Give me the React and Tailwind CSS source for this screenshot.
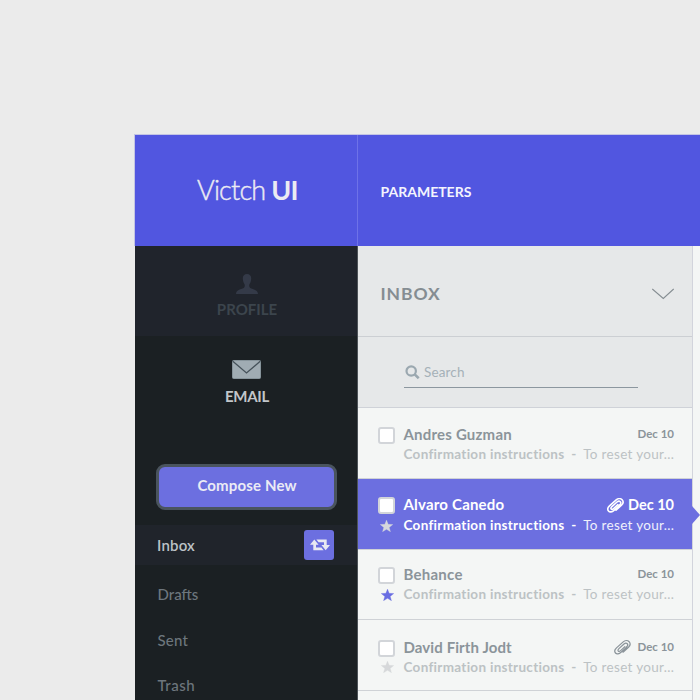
import React from "react";

function PersonIcon() {
  return (
    <svg className="block" width="22" height="20" viewBox="0 0 22 20" fill="#343a48">
      <path d="M11 0C8.300 0 6.700 1.900 6.800 4.600c.1 1.500.3 3 .9 4.200.5 1 1.100 1.600 1.100 2.900 0 2-1.600 2.600-3.600 3.300C2.300 16 .2 16.800 0 20h22c-.2-3.200-2.300-4-5.200-5-2-.7-3.600-1.300-3.600-3.300 0-1.300.6-1.900 1.100-2.900.6-1.200.8-2.700.9-4.200C15.300 1.900 13.700 0 11 0z" />
    </svg>
  );
}

function MailIcon() {
  return (
    <svg className="-ml-[2px] block" width="29" height="19" viewBox="0 0 29 19">
      <rect x="0.500" y="0.500" width="28" height="18" rx="1" fill="#a0acb3" stroke="#87949b" />
      <path d="M0.800 1.200 L14.500 13 L28.200 1.200" fill="none" stroke="#46525a" strokeWidth="1.300" />
    </svg>
  );
}

function RetweetIcon() {
  return (
    <svg className="block" width="20" height="12" viewBox="0 0 20 12" fill="#e9e9f2">
      <path d="M4.300 0.500 L8.600 5.700 H6 V8.500 H11.400 L13.600 11.200 H3.300 V5.700 H0 Z" />
      <path d="M15.700 11.200 L11.400 6 H14 V3.200 H8.600 L6.400 0.500 H16.700 V6 H20 Z" />
    </svg>
  );
}

function SearchIcon() {
  return (
    <svg className="block" width="15" height="15" viewBox="0 0 15 15" fill="none" stroke="#9ba8b0">
      <circle cx="6.200" cy="6" r="4.700" strokeWidth="2.200" />
      <path d="M9.700 9.400 L13.700 13.300" strokeWidth="2.600" />
    </svg>
  );
}

function Star({ color }) {
  return (
    <svg className="block" width="13" height="12" viewBox="0 0 13 12" fill={color} stroke={color} strokeWidth="0.300">
      <path d="M6.500 0.100 L8.150 4.300 L12.800 4.500 L9.200 7.450 L10.500 11.800 L6.500 9.350 L2.500 11.800 L3.800 7.450 L0.200 4.500 L4.850 4.300 Z" />
    </svg>
  );
}

function Clip({ color, weight }) {
  return (
    <svg className="block" width="17" height="15" viewBox="0 0 17 15" fill="none" stroke={color} strokeWidth={weight} strokeLinecap="round" strokeLinejoin="round">
      <path d="M12.600 7.200 L7 12.300 C5.100 14.100 2.700 14.500 1.500 13 C0.300 11.600 0.800 9.500 2.500 7.900 L9.200 1.900 C11 0.300 13.700 0.200 15.100 1.700 C16.500 3.300 16.200 5.600 14.500 7.200 L9 12.200" />
      <path d="M12.300 7.400 C14 5.800 14 4.500 13.300 3.700 C12.400 2.800 11.100 3 10 4 L4.900 8.600 C3.900 9.500 3.700 10.400 4.200 11 C4.800 11.600 5.700 11.400 6.600 10.600 L10.900 6.700" />
    </svg>
  );
}

function Row({ name, tracking, active, star, clip, height, pad, gap, starPad }) {
  const title = active ? "text-white" : "text-[#8b949a]";
  const sub = active ? "text-white" : "text-[#bcc2c4]";
  const preview = active ? "text-[#f0f0fc]" : "text-[#bcc2c4]";
  return (
    <div className={`flex border-b border-[#cfd2d6] ${height} ${pad} ${active ? "bg-[#6c6fe0]" : "bg-[#f4f6f5]"}`}>
      <div className="w-[45px] shrink-0 pl-5">
        <div className="h-[17px] w-[17px] rounded-[3px] border-2 border-[#d2d5d9] bg-white" />
        {star && <div className={starPad}><Star color={star} /></div>}
      </div>
      <div className="w-[271px] shrink-0 whitespace-nowrap pl-[0.500px]">
        <div className="flex h-[17px] justify-between">
          <span className={`-mt-px text-[15px] leading-[17px] font-bold ${tracking} ${title}`}>{name}</span>
          <span className="flex">
            {clip && <span className={active ? "mr-[4px] mt-px" : "mr-[7px]"}><Clip color={active ? "#fff" : "#8b949a"} weight={active ? 1.600 : 1.250} /></span>}
            <span className={`font-bold leading-[17px] ${active ? "-mt-px text-[14.500px]" : "-mt-[2px] text-[11.500px]"} ${title}`}>Dec 10</span>
          </span>
        </div>
        <div className={`flex h-[17px] items-center justify-between text-[13.500px] leading-[17px] ${gap}`}>
          <span className={`font-bold tracking-[0.300px] ${sub}`}>Confirmation instructions</span>
          <span className={`font-bold ${sub}`}>-</span>
          <span className={`tracking-[0.320px] -mr-[0.350px] ${preview}`}>To reset your...</span>
        </div>
      </div>
    </div>
  );
}

export default function App() {
  return (
    <div className="h-[700px] w-[700px] overflow-hidden bg-[#ebebeb] pl-[134px] pt-[134px] font-['Lato',sans-serif]">
      <div className="h-[566px] border-t border-[#c3c4e4]">
        <header className="flex h-[111px] border-l border-[#c3c4e4] bg-[#5156e0]">
          <div className="w-[223px] border-r border-[#6e72e8] pl-[62px] pt-[39px]">
            <div className="whitespace-nowrap text-[27px] leading-[32px] text-[#ebebf3]">
              <span className="font-light tracking-[-0.800px] [-webkit-text-stroke:0.400px_#ebebf3]">Victch</span> <span className="-ml-px font-bold tracking-[-0.900px]">UI</span>
            </div>
          </div>
          <div className="pl-[22.500px] pt-[48px] text-[14px] font-bold leading-[18px] text-[#f4f4fd]">PARAMETERS</div>
        </header>
        <div className="ml-px flex h-[454px]">
          <nav className="w-[223px] shrink-0 border-r border-[#4d5358] bg-[#1b2023]">
            <div className="flex h-[90px] flex-col items-center bg-[#20242c] pl-[2px] pt-[28px]">
              <PersonIcon />
              <span className="mt-[6px] text-[15px] font-bold leading-[18px] text-[#3c454d]">PROFILE</span>
            </div>
            <div className="flex h-[128px] flex-col items-center pl-[2px] pt-[24px]">
              <MailIcon />
              <span className="mt-[8px] text-[15px] font-bold leading-[18px] tracking-[-0.300px] text-[#c2c6ca]">EMAIL</span>
            </div>
            <div className="h-[61px] pl-[21px]">
              <button className="block h-[46px] w-[181px] rounded-[9px] border-[3px] border-[#4a545e] bg-[#6c6fe0] pb-[3px] pl-px text-[15px] font-bold leading-[37px] tracking-[0.150px] text-[#ebebf5]">Compose New</button>
            </div>
            <div className="flex h-[40px] items-center justify-between bg-[#20242b] pl-[22px] pr-[23px]">
              <span className="text-[15px] font-semibold tracking-[0.200px] text-[#bcc2c6]">Inbox</span>
              <span className="flex h-[30px] w-[30px] items-center justify-center rounded-[3px] bg-[#6c6fe0] pl-[2px]"><RetweetIcon /></span>
            </div>
            <div className="pl-[22.500px] text-[15px] font-medium leading-[18px] text-[#6d767d]">
              <div className="mt-[20px]">Drafts</div>
              <div className="mt-[28px] tracking-[0.200px]">Sent</div>
              <div className="mt-[27px] tracking-[0.500px]">Trash</div>
            </div>
          </nav>
          <main className="w-[335px] shrink-0 border-r border-[#d2d4dc]">
            <div className="flex h-[91px] justify-between border-b border-[#cccfd3] bg-[#e6e8e9] pl-[22.500px] pr-[18px]">
              <span className="pt-[37px] text-[17.500px] font-bold leading-[22px] tracking-[0.900px] text-[#858d92]">INBOX</span>
              <svg className="mt-[42px] block" width="22" height="12" viewBox="0 0 22 12" fill="none" stroke="#858d92" strokeWidth="1.100"><path d="M0.300 1 L11.300 10.500 L21.700 1" /></svg>
            </div>
            <div className="h-[71px] border-b border-[#cfd2d8] bg-[#e6e8e9] pl-[46px] pt-[28px]">
              <div className="flex h-[23px] w-[234px] border-b border-[#8c979f] pl-px">
                <SearchIcon />
                <span className="ml-[4px] -mt-px text-[13.500px] leading-[16px] tracking-[0.150px] text-[#a5b1b8]">Search</span>
              </div>
            </div>
            <Row name="Andres Guzman" tracking="tracking-[0.200px]" height="h-[71px]" pad="pt-[19px]" gap="mt-[2px]" />
            <Row name="Alvaro Canedo" tracking="tracking-[0.200px]" active clip star="#d6d8dc" height="h-[71px]" pad="pt-[18px]" gap="mt-[3px]" starPad="pt-[6px] pl-[2px]" />
            <Row name="Behance" tracking="tracking-[0.250px]" star="#696de2" height="h-[70px]" pad="pt-[17px]" gap="mt-[2px]" starPad="pt-[5px] pl-[3px]" />
            <Row name="David Firth Jodt" tracking="tracking-[0.100px]" clip star="#d6d8da" height="h-[71px]" pad="pt-[20px]" gap="mt-[2px]" starPad="pt-[4px] pl-[3px]" />
            <div className="h-[10px] bg-[#f4f6f5]" />
          </main>
          <aside className="flex-1 bg-[#f4f6f5] pt-[260px]">
            <svg className="-ml-px block" width="8" height="18" viewBox="0 0 8 18"><path d="M0 0 L8 9 L0 18 Z" fill="#6c6fe0" /></svg>
          </aside>
        </div>
      </div>
    </div>
  );
}
